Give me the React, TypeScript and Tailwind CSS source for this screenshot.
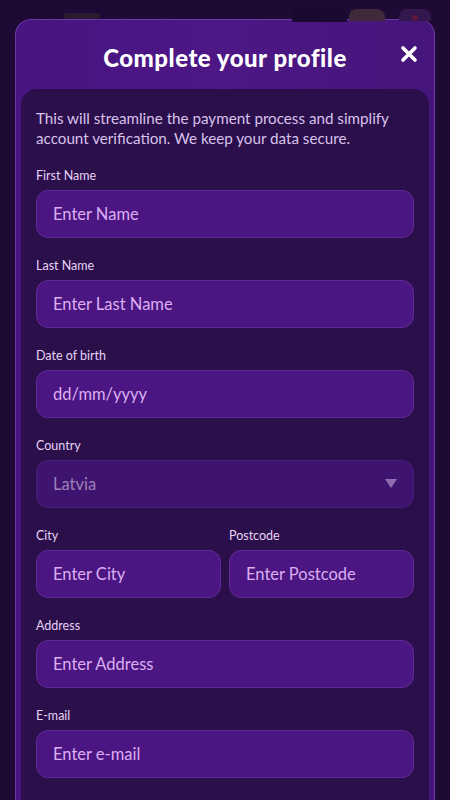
const Field = ({ label, placeholder }: { label: string; placeholder: string }) => (
    <div className="flex flex-col">
        <label className="text-[12.5px] leading-4 text-[#e6d3f5] mb-[6px]">{label}</label>
        <div className="h-12 rounded-xl bg-[#4b1682] border border-[#5f2b97] flex items-center pl-4 text-[16.5px] text-[#dcaef2]">
            {placeholder}
        </div>
    </div>
);

const App = () => {
    return (
        <div
            className="w-[450px] h-[800px] overflow-hidden bg-[#1f0a36] relative"
            style={{ fontFamily: 'Lato, "Noto Sans", sans-serif' }}
        >
            {/* faded top bar behind the modal */}
            <div className="h-[19px] flex items-start">
                <div className="ml-[64px] mt-[13px] w-[36px] h-[6px] rounded bg-[#3a2a28] opacity-50" />
                <div className="ml-auto mt-[8px] w-[55px] h-[14px] rounded-t-lg bg-[#1b0930]" />
                <div className="ml-[2px] mt-[9px] w-[36px] h-[12px] rounded-t-lg bg-[#3f2a3c]" />
                <div className="ml-[14px] mr-[19px] mt-[9px] w-[32px] h-[12px] rounded-t-lg bg-[#33184f] flex justify-center">
                    <div className="mt-[6px] w-[6px] h-[6px] rounded-full bg-[#5e1a3a]" />
                </div>
            </div>

            <div className="mx-[15px] rounded-t-2xl border-t border-x border-[#6a3aa3] bg-gradient-to-r from-[#471480] via-[#4d1785] to-[#45157a] px-[5px] h-[790px]">
                <div className="h-[69px] relative flex items-center justify-center">
                    <h1 className="text-[24px] font-black text-white tracking-[0.5px] mt-[6px]">
                        Complete your profile
                    </h1>
                    <svg
                        className="absolute right-[11px] top-[25px]"
                        width="18"
                        height="18"
                        viewBox="0 0 18 18"
                    >
                        <path d="M3 3 L15 15 M15 3 L3 15" stroke="#fff" strokeWidth="3.6" strokeLinecap="round" />
                    </svg>
                </div>

                <div className="rounded-t-2xl bg-[#2b0f4b] px-[15px] pt-[19px] pb-6 flex flex-col gap-5 h-full">
                    <p className="text-[15.2px] leading-5 text-[#d8c2ec]">
                        This will streamline the payment process and simplify account verification. We keep your data secure.
                    </p>
                    <Field label="First Name" placeholder="Enter Name" />
                    <Field label="Last Name" placeholder="Enter Last Name" />
                    <Field label="Date of birth" placeholder="dd/mm/yyyy" />
                    <div className="flex flex-col">
                        <label className="text-[12.5px] leading-4 text-[#e6d3f5] mb-[6px]">Country</label>
                        <div className="h-12 rounded-xl bg-[#3f1470] border border-[#4a1c7c] flex items-center pl-4 pr-4 text-[16.5px] text-[#9d80b9]">
                            <span className="flex-1">Latvia</span>
                            <svg width="12" height="10" viewBox="0 0 12 10">
                                <path d="M0 0 H12 L6 9 Z" fill="#8f6db1" />
                            </svg>
                        </div>
                    </div>
                    <div className="grid grid-cols-2 gap-2">
                        <Field label="City" placeholder="Enter City" />
                        <Field label="Postcode" placeholder="Enter Postcode" />
                    </div>
                    <Field label="Address" placeholder="Enter Address" />
                    <Field label="E-mail" placeholder="Enter e-mail" />
                </div>
            </div>
        </div>
    );
};

export default App;
